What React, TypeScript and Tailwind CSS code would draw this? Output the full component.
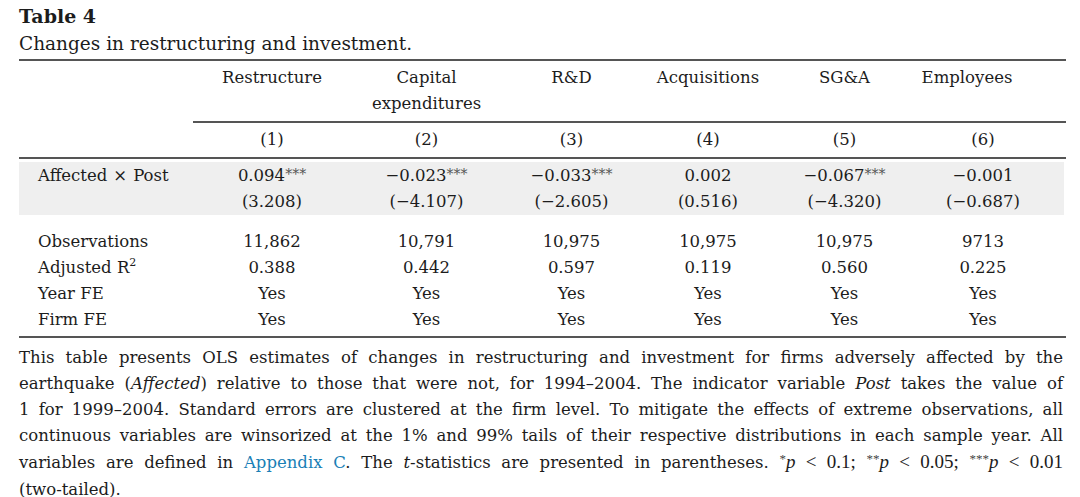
import React from "react";

const grid =
  "grid grid-cols-[174px_158px_151px_139px_134px_139px_138px_14px]";

const Stars = ({ n }: { n: number }) => (
  <span className="relative -top-[2px] text-[14px] text-[#555]">{"*".repeat(n)}</span>
);

type Cell = React.ReactNode;

const Row = ({ label, cells }: { label?: Cell; cells: Cell[] }) => (
  <div className={`${grid} h-[26px] leading-[26px]`}>
    <div className="pl-[19px] whitespace-nowrap">{label}</div>
    {cells.map((c, i) => (
      <div key={i} className="text-center whitespace-nowrap">
        {c}
      </div>
    ))}
    <div />
  </div>
);

const M = "\u2212";

export default function App() {
  return (
    <div className="w-[1080px] h-[497px] bg-white overflow-hidden">
      <div className="ml-[19px] w-[1047px] pt-[2px] font-['DejaVu_Serif',serif] text-[#1c1c1c] text-[16.5px]">
        <div className="text-[19px] leading-[28px] font-bold">Table 4</div>
        <div className="text-[18.5px] leading-[28px]">Changes in restructuring and investment.</div>
        <div className="mt-[1px] h-[2px] bg-[#555]" />

        {/* header */}
        <div className={`${grid} pt-[4px] pb-[4px] leading-[26px]`}>
          <div />
          <div className="text-center">Restructure</div>
          <div className="text-center">
            Capital
            <br />
            expenditures
          </div>
          <div className="text-center">R&amp;D</div>
          <div className="text-center">Acquisitions</div>
          <div className="text-center">SG&amp;A</div>
          <div className="text-center pr-[32px]">Employees</div>
          <div />
        </div>
        <div className="ml-[174px] h-[2px] bg-[#555]" />

        <div className="pt-[4px] pb-[4px]">
          <Row cells={["(1)", "(2)", "(3)", "(4)", "(5)", "(6)"]} />
        </div>
        <div className="h-[2px] bg-[#555]" />

        {/* shaded coefficient row */}
        <div className="mt-[3px] mr-[2px] pt-[1px] bg-[#efefef]">
          <Row
            label={
              <>
                Affected<span className="mx-[6px]">×</span>Post
              </>
            }
            cells={[
              <>0.094<Stars n={3} /></>,
              <>{M}0.023<Stars n={3} /></>,
              <>{M}0.033<Stars n={3} /></>,
              <>0.002</>,
              <>{M}0.067<Stars n={3} /></>,
              <>{M}0.001</>,
            ]}
          />
          <Row
            cells={[
              "(3.208)",
              `(${M}4.107)`,
              `(${M}2.605)`,
              "(0.516)",
              `(${M}4.320)`,
              `(${M}0.687)`,
            ]}
          />
        </div>

        <div className="mt-[14px]">
          <Row label="Observations" cells={["11,862", "10,791", "10,975", "10,975", "10,975", "9713"]} />
          <Row
            label={
              <>
                Adjusted R<span className="relative -top-[7px] text-[11px]">2</span>
              </>
            }
            cells={["0.388", "0.442", "0.597", "0.119", "0.560", "0.225"]}
          />
          <Row label="Year FE" cells={["Yes", "Yes", "Yes", "Yes", "Yes", "Yes"]} />
          <Row label="Firm FE" cells={["Yes", "Yes", "Yes", "Yes", "Yes", "Yes"]} />
        </div>
        <div className="mt-[3px] h-[2px] bg-[#555]" />

        {/* note */}
        <div className="pt-[7px] w-[1044px] leading-[26px]">
          <div className="text-justify [text-align-last:justify]">
            This table presents OLS estimates of changes in restructuring and investment for firms adversely affected by the
          </div>
          <div className="text-justify [text-align-last:justify]">
            earthquake (<i>Affected</i>) relative to those that were not, for 1994–2004. The indicator variable <i>Post</i> takes the value of
          </div>
          <div className="text-justify [text-align-last:justify]">
            1 for 1999–2004. Standard errors are clustered at the firm level. To mitigate the effects of extreme observations, all
          </div>
          <div className="text-justify [text-align-last:justify]">
            continuous variables are winsorized at the 1% and 99% tails of their respective distributions in each sample year. All
          </div>
          <div className="text-justify [text-align-last:justify]">
            variables are defined in <span className="text-[#1a80b6]">Appendix C</span>. The <i>t</i>-statistics are presented in parentheses.{" "}
            <span className="font-['Liberation_Serif',serif] text-[19px]">
              <span className="relative -top-[5px] text-[13px] text-[#444]">*</span>
              <i>p</i> &lt; 0.1;
            </span>{" "}
            <span className="font-['Liberation_Serif',serif] text-[19px]">
              <span className="relative -top-[5px] text-[13px] text-[#444]">**</span>
              <i>p</i> &lt; 0.05;
            </span>{" "}
            <span className="font-['Liberation_Serif',serif] text-[19px]">
              <span className="relative -top-[5px] text-[13px] text-[#444]">***</span>
              <i>p</i> &lt; 0.01
            </span>
          </div>
          <div>(two-tailed).</div>
        </div>
      </div>
    </div>
  );
}
